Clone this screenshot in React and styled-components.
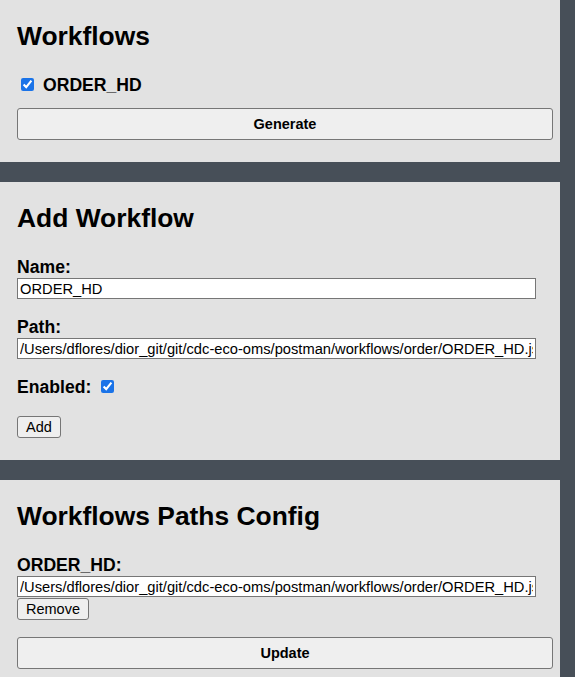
import { useState } from "react";
import styled, { createGlobalStyle } from "styled-components";

const GlobalStyle = createGlobalStyle`
  html, body {
    margin: 0;
    padding: 0;
    background: #474f58;
  }
  body {
    font-family: "Liberation Sans", Arial, sans-serif;
    color: #000;
  }
`;

const Page = styled.div`
  display: flex;
  flex-direction: column;
  gap: 20px;
  width: 560px;
  min-height: 100vh;
  background: #474f58;
`;

const Panel = styled.section`
  background: #e2e2e2;
  padding: 21px 7px 22px 17px;
`;

const Title = styled.h2`
  margin: 0 0 24px;
  font-size: 26.4px;
  line-height: 30px;
  font-weight: 700;
`;

const Row = styled.label`
  display: flex;
  align-items: flex-start;
  height: 20px;
  font-size: 17.6px;
  line-height: 20px;
  font-weight: 700;
`;

const Check = styled.input.attrs({ type: "checkbox" })`
  width: 13px;
  height: 13px;
  margin: 3px 0 0 ${(p) => p.$left || 0}px;
  accent-color: #1a73e8;
  flex-shrink: 0;
`;

const CheckText = styled.span`
  margin-left: 9px;
`;

const Field = styled.div`
  margin-bottom: 18px;
`;

const Label = styled.label`
  display: block;
  height: 20px;
  font-size: 17.6px;
  line-height: 20px;
  font-weight: 700;
`;

const TextInput = styled.input`
  display: block;
  box-sizing: border-box;
  width: 519px;
  height: 21px;
  margin: 1px 0 0;
  padding: 0 2px;
  border: 1px solid #767676;
  border-radius: 0;
  background: #fff;
  font-family: "Liberation Sans", Arial, sans-serif;
  font-size: 14.7px;
  color: #000;
  outline: none;
`;

const Button = styled.button`
  display: block;
  box-sizing: border-box;
  width: ${(p) => (p.$wide ? "536px" : "auto")};
  height: ${(p) => (p.$wide ? "32px" : "22px")};
  margin-top: ${(p) => p.$top || 0}px;
  padding: 0 8px;
  border: 1px solid #767676;
  border-radius: 3px;
  background: #efefef;
  font-family: "Liberation Sans", Arial, sans-serif;
  font-size: 14.5px;
  font-weight: ${(p) => (p.$wide ? 700 : 400)};
  color: #000;
  cursor: pointer;
`;

const App = () => {
  const [selected, setSelected] = useState(true);
  const [name, setName] = useState("ORDER_HD");
  const [path, setPath] = useState(
    "/Users/dflores/dior_git/git/cdc-eco-oms/postman/workflows/order/ORDER_HD.json"
  );
  const [enabled, setEnabled] = useState(true);
  const [paths, setPaths] = useState({
    ORDER_HD:
      "/Users/dflores/dior_git/git/cdc-eco-oms/postman/workflows/order/ORDER_HD.json",
  });

  return (
    <>
      <GlobalStyle />
      <Page>
        <Panel>
          <Title>Workflows</Title>
          <Row>
            <Check
              $left={4}
              checked={selected}
              onChange={(e) => setSelected(e.target.checked)}
            />
            <CheckText>ORDER_HD</CheckText>
          </Row>
          <Button $wide $top={13}>
            Generate
          </Button>
        </Panel>

        <Panel>
          <Title>Add Workflow</Title>
          <Field>
            <Label htmlFor="wf-name">Name:</Label>
            <TextInput
              id="wf-name"
              value={name}
              onChange={(e) => setName(e.target.value)}
            />
          </Field>
          <Field>
            <Label htmlFor="wf-path">Path:</Label>
            <TextInput
              id="wf-path"
              value={path}
              onChange={(e) => setPath(e.target.value)}
            />
          </Field>
          <Row>
            Enabled:
            <Check
              $left={10}
              checked={enabled}
              onChange={(e) => setEnabled(e.target.checked)}
            />
          </Row>
          <Button $top={19}>Add</Button>
        </Panel>

        <Panel>
          <Title>Workflows Paths Config</Title>
          {Object.keys(paths).map((key) => (
            <div key={key}>
              <Label htmlFor={"cfg-" + key}>{key}:</Label>
              <TextInput
                id={"cfg-" + key}
                value={paths[key]}
                onChange={(e) => setPaths({ ...paths, [key]: e.target.value })}
              />
              <Button $top={1}>Remove</Button>
            </div>
          ))}
          <Button $wide $top={17}>
            Update
          </Button>
        </Panel>
      </Page>
    </>
  );
};

export default App;
